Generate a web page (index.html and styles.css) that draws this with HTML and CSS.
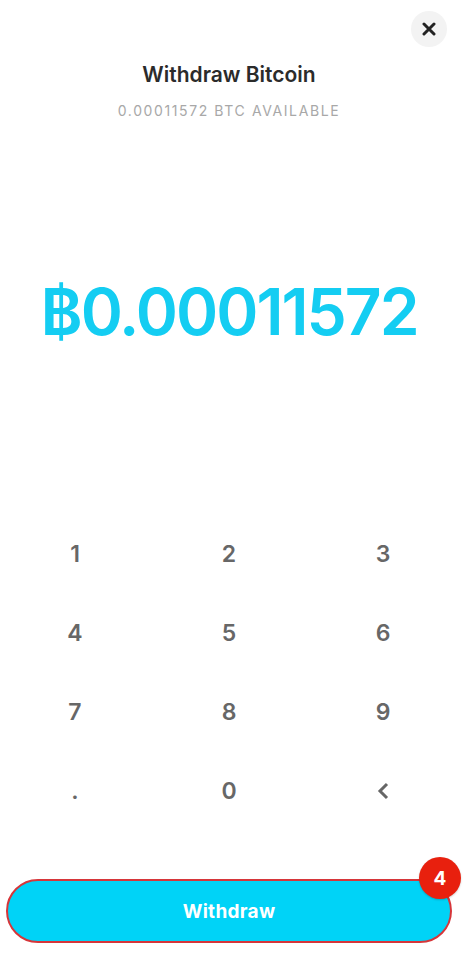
FILE: index.html
```html
<!DOCTYPE html>
<html>
<head>
<meta charset="utf-8">
<link rel="stylesheet" href="styles.css">
</head>
<body>
<div class="screen">
  <div class="topbar">
    <button class="close" aria-label="Close">
      <svg width="14" height="14" viewBox="0 0 14 14"><path d="M2 2L12 12M12 2L2 12" stroke="#222" stroke-width="3" stroke-linecap="round"/></svg>
    </button>
  </div>
  <h1 class="title">Withdraw Bitcoin</h1>
  <div class="subtitle">0.00011572 BTC AVAILABLE</div>
  <div class="amount">฿0.00011572</div>
  <div class="keypad">
    <div class="key">1</div><div class="key">2</div><div class="key">3</div>
    <div class="key">4</div><div class="key">5</div><div class="key">6</div>
    <div class="key">7</div><div class="key">8</div><div class="key">9</div>
    <div class="key dot">.</div><div class="key">0</div>
    <div class="key back"><svg width="12" height="18" viewBox="0 0 12 18"><path d="M10 2L3 9L10 16" fill="none" stroke="#666" stroke-width="3" stroke-linejoin="miter"/></svg></div>
  </div>
  <div class="action">
    <button class="withdraw">Withdraw</button>
    <span class="badge">4</span>
  </div>
</div>
</body>
</html>
```
FILE: styles.css
```css
html, body {
  margin: 0;
  padding: 0;
  background: #fff;
}
body {
  font-family: Inter, "Noto Sans", "DejaVu Sans", sans-serif;
}
.screen {
  width: 458px;
  height: 974px;
  display: flex;
  flex-direction: column;
  align-items: center;
}
.topbar {
  width: 100%;
  display: flex;
  justify-content: flex-end;
  padding: 11px 11px 0 0;
  box-sizing: border-box;
}
.close {
  width: 36px;
  height: 36px;
  border-radius: 50%;
  border: none;
  background: #f3f3f3;
  display: flex;
  align-items: center;
  justify-content: center;
  padding: 0;
}
.title {
  margin: 14px 0 0;
  font-size: 21px;
  font-weight: 600;
  color: #2b2b2b;
  line-height: 28px;
}
.subtitle {
  margin-top: 13px;
  font-size: 14px;
  letter-spacing: 1.6px;
  color: #a8a8a8;
  line-height: 18px;
}
.amount {
  margin-top: 152px;
  font-size: 64px;
  font-weight: 600;
  color: #14cdf2;
  line-height: 80px;
  letter-spacing: -2px;
  font-family: Inter, "DejaVu Sans", sans-serif;
}
.keypad {
  margin-top: 162px;
  width: 458px;
  display: grid;
  grid-template-columns: 150px 158px 150px;
  grid-auto-rows: 79px;
}
.key {
  display: flex;
  align-items: center;
  justify-content: center;
  font-size: 23px;
  font-weight: 600;
  color: #676767;
}
.action {
  margin-top: 49px;
  width: 446px;
  position: relative;
}
.withdraw {
  width: 100%;
  height: 64px;
  border-radius: 32px;
  border: 2px solid #d6363a;
  background: #00d3f7;
  color: #fff;
  font-family: Inter, sans-serif;
  font-size: 19px;
  font-weight: 700;
  letter-spacing: 0.3px;
}
.badge {
  position: absolute;
  right: -9px;
  top: -22px;
  width: 42px;
  height: 42px;
  border-radius: 50%;
  background: #e8200e;
  color: #fff;
  font-size: 19px;
  font-weight: 700;
  display: flex;
  align-items: center;
  justify-content: center;
  box-shadow: 0 1px 2px rgba(0,0,0,0.2);
}
```
